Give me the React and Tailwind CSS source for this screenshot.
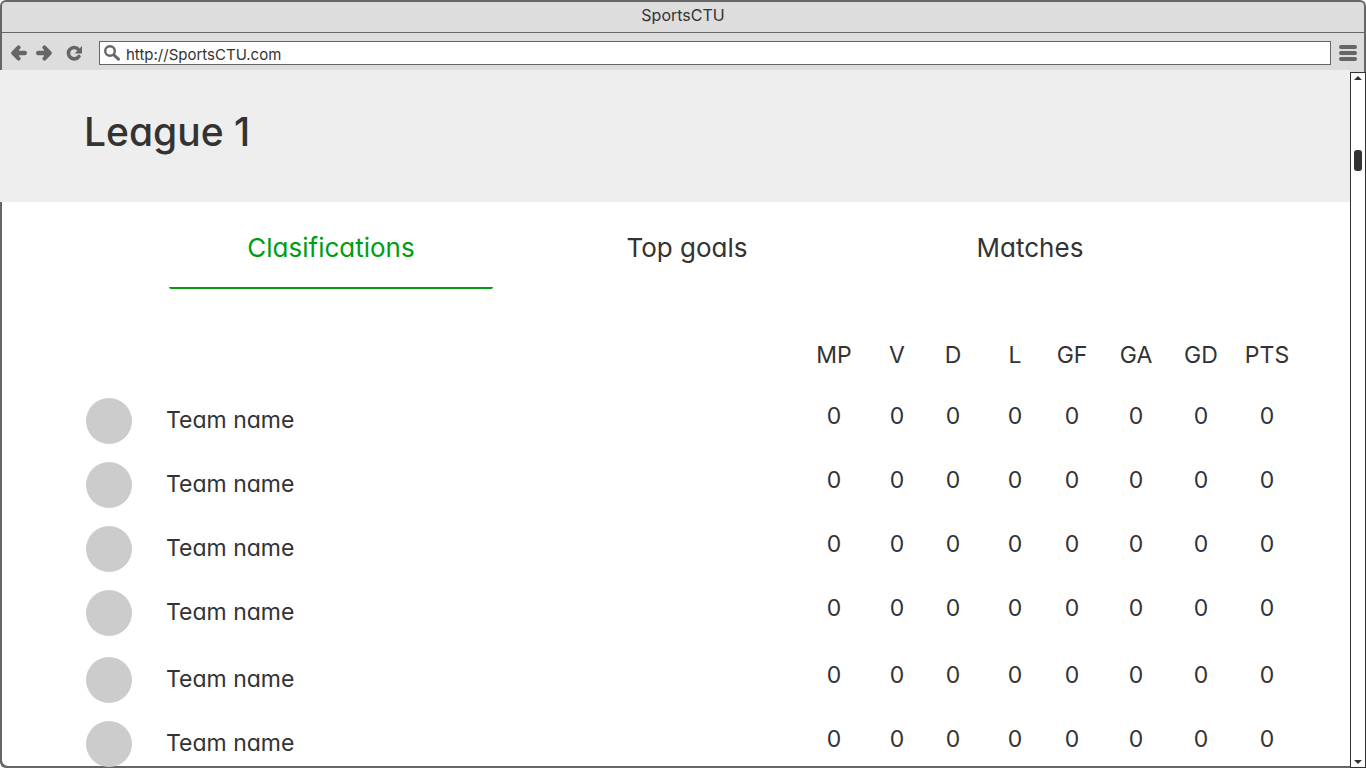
import React, { useState } from "react";

const tabs = ["Clasifications", "Top goals", "Matches"];

const columns = [
  { key: "MP", width: "w-[76px]" },
  { key: "V", width: "w-[50px]" },
  { key: "D", width: "w-[62px]" },
  { key: "L", width: "w-[62px]" },
  { key: "GF", width: "w-[52px]" },
  { key: "GA", width: "w-[76px]" },
  { key: "GD", width: "w-[54px]" },
  { key: "PTS", width: "w-[78px]" },
];

const teams = [
  { id: 1, height: "h-16" },
  { id: 2, height: "h-16" },
  { id: 3, height: "h-16" },
  { id: 4, height: "h-[67px]" },
  { id: 5, height: "h-16" },
  { id: 6, height: "h-16" },
];

function ArrowIcon({ className = "" }) {
  return (
    <svg viewBox="0 0 16 16" className={"size-4 " + className} fill="none" stroke="currentColor" strokeLinejoin="round" strokeLinecap="round" aria-hidden="true">
      <path d="M4 8H13.8" strokeWidth="4.4" />
      <path d="M7.6 2.4L2.2 8L7.6 13.6" strokeWidth="4" />
      <path d="M3 8L7.5 4.5V11.5Z" fill="currentColor" strokeWidth="1" />
    </svg>
  );
}

function ReloadIcon() {
  return (
    <svg viewBox="0 0 16 16" className="size-4" aria-hidden="true">
      <path d="M11.8 3.8A5.7 5.7 0 1 0 12.9 11.4" fill="none" stroke="currentColor" strokeWidth="3.6" strokeLinecap="round" />
      <path d="M16 1V8.4H8.6Z" fill="currentColor" />
    </svg>
  );
}

function SearchIcon() {
  return (
    <svg viewBox="0 0 16 16" className="size-4" fill="none" stroke="currentColor" strokeLinecap="round" aria-hidden="true">
      <circle cx="6" cy="6" r="4.8" strokeWidth="2.4" />
      <path d="M10 10L14.4 14.2" strokeWidth="3" />
    </svg>
  );
}

function MenuIcon() {
  return (
    <svg viewBox="0 0 18 16" className="h-4 w-[18px]" fill="currentColor" aria-hidden="true">
      <rect y="0" width="18" height="4" rx="2" />
      <rect y="6" width="18" height="4" rx="2" />
      <rect y="12" width="18" height="4" rx="2" />
    </svg>
  );
}

function BrowserChrome() {
  return (
    <header className="shrink-0 rounded-t-md border-x-2 border-t-2 border-[#666] bg-[#ddd]">
      <div className="flex h-[31px] justify-center border-b border-[#666] text-base leading-[26px]">SportsCTU</div>
      <div className="flex h-[37px] items-center pt-0.5 pr-[7px] pl-[9px] text-[#666]">
        <button type="button" aria-label="Back" className="mr-[9px]">
          <ArrowIcon />
        </button>
        <button type="button" aria-label="Forward" className="mr-[14px]">
          <ArrowIcon className="rotate-180" />
        </button>
        <button type="button" aria-label="Reload" className="mr-[17px]">
          <ReloadIcon />
        </button>
        <label className="mr-2 flex h-6 flex-1 gap-1.5 border border-[#666] bg-white pt-[3px] pl-1">
          <SearchIcon />
          <input aria-label="Address" defaultValue="http://SportsCTU.com" className="h-5 min-w-0 flex-1 bg-transparent text-[15px] leading-5 text-[#333] outline-none" />
        </label>
        <button type="button" aria-label="Menu">
          <MenuIcon />
        </button>
      </div>
    </header>
  );
}

function Scrollbar() {
  return (
    <aside className="flex w-4 shrink-0 flex-col border-r-2 border-[#666] bg-[#ddd] pt-0.5">
      <div className="-mr-0.5 flex flex-1 flex-col items-center justify-between border border-[#333] bg-white text-[#333]">
        <div className="flex flex-col items-center">
          <button type="button" aria-label="Scroll up" className="h-[77px] pt-[3px]">
            <svg viewBox="0 0 8 4" className="mb-[70px] h-1 w-2" fill="currentColor" aria-hidden="true">
              <path d="M4 0L8 4H0Z" />
            </svg>
          </button>
          <div className="h-[21px] w-2 rounded-[3px] bg-[#333]" />
        </div>
        <button type="button" aria-label="Scroll down" className="pb-[3px]">
          <svg viewBox="0 0 8 4" className="h-1 w-2" fill="currentColor" aria-hidden="true">
            <path d="M4 4L8 0H0Z" />
          </svg>
        </button>
      </div>
    </aside>
  );
}

export default function App() {
  const [active, setActive] = useState("Clasifications");
  return (
    <div className="flex h-screen flex-col overflow-hidden bg-white font-['Inter','Open_Sans',sans-serif] text-[#333] [font-feature-settings:'cv11']">
      <BrowserChrome />
      <div className="flex min-h-0 flex-1">
        <div className="flex min-w-0 flex-1 flex-col">
          <div className="h-[132px] shrink-0 bg-[#eee] pt-9 pl-[84px]">
            <h1 className="text-[39px] leading-[52px] font-medium">League 1</h1>
          </div>
          <main className="min-h-0 flex-1 overflow-hidden rounded-bl-md shadow-[inset_2px_-2px_0_#666]">
            <div role="tablist" className="grid grid-cols-[324fr_388fr_298fr] pr-[171px] pl-[169px]">
              {tabs.map((tab) => (
                <button
                  key={tab}
                  type="button"
                  role="tab"
                  aria-selected={active === tab}
                  onClick={() => setActive(tab)}
                  className={
                    "h-[87px] rounded-xs border-b-2 pt-7 pb-[21px] text-[26px] leading-9 " +
                    (active === tab ? "border-[#009e0f] text-[#009e0f]" : "border-transparent")
                  }
                >
                  {tab}
                </button>
              ))}
            </div>
            <div className="pt-12 pr-11 pl-[86px]">
              <table aria-label="Clasifications" className="w-full table-fixed text-[23px]">
                <thead>
                  <tr className="h-[61px] align-top">
                    <td className="w-20 p-0" />
                    <td className="p-0" />
                    {columns.map((c) => (
                      <th key={c.key} scope="col" className={c.width + " p-0 text-center leading-[37px] font-normal"}>
                        {c.key}
                      </th>
                    ))}
                  </tr>
                </thead>
                <tbody>
                  {teams.map((team) => (
                    <tr key={team.id} className={team.height + " align-top"}>
                      <td className="p-0">
                        <div className="size-[46px] rounded-full bg-[#ccc]" />
                      </td>
                      <td className="p-0 leading-[45px]">Team name</td>
                      {columns.map((c) => (
                        <td key={c.key} className="p-0 text-center leading-[37px]">
                          0
                        </td>
                      ))}
                    </tr>
                  ))}
                </tbody>
              </table>
            </div>
          </main>
        </div>
        <Scrollbar />
      </div>
    </div>
  );
}
